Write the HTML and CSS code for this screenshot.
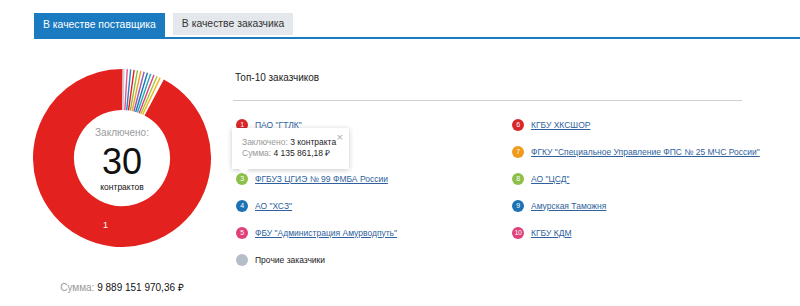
FILE: index.html
```html
<!DOCTYPE html>
<html lang="ru">
<head>
<meta charset="utf-8">
<title>Контракты</title>
<link rel="stylesheet" href="styles.css">
</head>
<body>
<div class="tabs">
  <div class="tab tab-active">В качестве поставщика</div>
  <div class="tab">В качестве заказчика</div>
</div>
<div class="content">
  <div class="chart-col">
    <div class="donut">
      <svg class="donut-svg" width="178" height="178" viewBox="-89 -89 178 178">
        <circle r="68.5" fill="none" stroke="#e3221f" stroke-width="41" stroke-dasharray="396.6 430.4" transform="rotate(-62)"/>
        <g stroke-width="1.4" fill="none">
          <line x1="0" y1="-48" x2="0" y2="-89" stroke="#c9ccd3" transform="rotate(1.2)"/>
          <line x1="0" y1="-48" x2="0" y2="-89" stroke="#e55591" transform="rotate(3.4)"/>
          <line x1="0" y1="-48" x2="0" y2="-89" stroke="#2d7fc3" transform="rotate(5.6)"/>
          <line x1="0" y1="-48" x2="0" y2="-89" stroke="#e3221f" transform="rotate(7.8)"/>
          <line x1="0" y1="-48" x2="0" y2="-89" stroke="#8cc04a" transform="rotate(10)"/>
          <line x1="0" y1="-48" x2="0" y2="-89" stroke="#f2a31f" transform="rotate(12.2)"/>
          <line x1="0" y1="-48" x2="0" y2="-89" stroke="#9b59b6" transform="rotate(14.4)"/>
          <line x1="0" y1="-48" x2="0" y2="-89" stroke="#1a75b8" transform="rotate(16.6)"/>
          <line x1="0" y1="-48" x2="0" y2="-89" stroke="#25a9b0" transform="rotate(18.8)"/>
          <line x1="0" y1="-48" x2="0" y2="-89" stroke="#e0407a" transform="rotate(21)"/>
          <line x1="0" y1="-48" x2="0" y2="-89" stroke="#a8c83a" transform="rotate(23.2)"/>
          <line x1="0" y1="-48" x2="0" y2="-89" stroke="#f2b42a" transform="rotate(25.4)"/>
        </g>
      </svg>
      <div class="donut-center">
        <div class="dc-label">Заключено:</div>
        <div class="dc-num">30</div>
        <div class="dc-unit">контрактов</div>
      </div>
      <div class="slice-label">1</div>
    </div>
    <div class="sum"><span class="muted">Сумма:</span> <span class="sum-val">9 889 151 970,36 ₽</span></div>
  </div>
  <div class="top">
    <div class="top-title">Топ-10 заказчиков</div>
    <div class="list">
      <div class="item"><span class="dot c-red">1</span><a class="link" href="#">ПАО "ГТЛК"</a></div>
      <div class="item"><span class="dot c-orange"></span></div>
      <div class="item"><span class="dot c-green">3</span><a class="link" href="#">ФГБУЗ ЦГИЭ № 99 ФМБА России</a></div>
      <div class="item"><span class="dot c-blue">4</span><a class="link" href="#">АО "ХСЗ"</a></div>
      <div class="item"><span class="dot c-pink">5</span><a class="link" href="#">ФБУ "Администрация Амурводпуть"</a></div>
      <div class="item"><span class="dot c-gray"></span><span class="plain">Прочие заказчики</span></div>
      <div class="item"><span class="dot c-red">6</span><a class="link" href="#">КГБУ ХКСШОР</a></div>
      <div class="item"><span class="dot c-orange">7</span><a class="link" href="#">ФГКУ "Специальное Управление ФПС № 25 МЧС России"</a></div>
      <div class="item"><span class="dot c-green">8</span><a class="link" href="#">АО "ЦСД"</a></div>
      <div class="item"><span class="dot c-blue">9</span><a class="link" href="#">Амурская Таможня</a></div>
      <div class="item"><span class="dot c-pink">10</span><a class="link" href="#">КГБУ КДМ</a></div>
      <div class="tooltip">
        <span class="tt-close">×</span>
        <div><span class="muted">Заключено:</span> 3 контракта</div>
        <div><span class="muted">Сумма:</span> 4 135 861,18 ₽</div>
      </div>
    </div>
  </div>
</div>
</body>
</html>
```
FILE: styles.css
```css
* { box-sizing: border-box; }
html, body { margin: 0; padding: 0; background: #fff; }
body {
  font-family: "Liberation Sans", Arial, sans-serif;
  color: #222;
  width: 800px;
  height: 306px;
  overflow: hidden;
}
.tabs {
  display: flex;
  align-items: flex-start;
  gap: 8px;
  margin: 13px 0 0 34px;
  border-bottom: 2px solid #1b7bc1;
  height: 26px;
}
.tab {
  height: 22px;
  line-height: 22px;
  padding: 0 9px;
  font-size: 10.4px;
  background: #e4e7eb;
  color: #333;
}
.tab-active {
  height: 24px;
  line-height: 24px;
  background: #1b7bc1;
  color: #fff;
}
.content {
  display: flex;
  margin: 30px 0 0 33px;
}
.chart-col {
  width: 178px;
  display: flex;
  flex-direction: column;
  align-items: center;
}
.donut {
  position: relative;
  width: 178px;
  height: 178px;
}
.donut-svg { display: block; }
.donut-center {
  position: absolute;
  inset: 0;
  display: flex;
  flex-direction: column;
  align-items: center;
  justify-content: center;
  padding-top: 2px;
}
.dc-label {
  font-size: 10px;
  line-height: 14px;
  color: #9a9a9a;
  margin-bottom: 5px;
}
.dc-num {
  font-size: 36px;
  line-height: 34px;
  color: #111;
}
.dc-unit {
  font-size: 8.5px;
  line-height: 12px;
  margin-top: 2px;
  color: #111;
}
.slice-label {
  position: absolute;
  left: 70px;
  top: 151px;
  font-size: 9px;
  color: #fff;
}
.sum {
  margin-top: 34px;
  font-size: 10px;
  line-height: 14px;
  white-space: nowrap;
}
.muted { color: #999; }
.sum-val { color: #111; }
.top {
  margin-left: 22px;
  width: 509px;
  padding-top: 2px;
}
.top-title {
  font-size: 10px;
  line-height: 14px;
  padding-left: 2px;
  color: #222;
}
.list {
  position: relative;
  margin-top: 15px;
  border-top: 1px solid #cfcfcf;
  padding: 10px 0 0 3px;
  display: grid;
  grid-template-columns: 276px 1fr;
  grid-template-rows: repeat(6, 27px);
  grid-auto-flow: column;
}
.item {
  display: flex;
  align-items: center;
  gap: 7px;
  font-size: 8.5px;
  white-space: nowrap;
}
.dot {
  width: 12px;
  height: 12px;
  border-radius: 50%;
  flex: none;
  color: #fff;
  font-size: 7px;
  line-height: 12px;
  text-align: center;
  letter-spacing: -0.3px;
}
.c-red { background: #d8262a; }
.c-orange { background: #f09a1c; }
.c-green { background: #8cc04a; }
.c-blue { background: #1c73b4; }
.c-pink { background: #e0407a; }
.c-gray { background: #b5bec8; }
.link {
  color: #2f5f9c;
  text-decoration: underline;
}
.plain { color: #222; }
.tooltip {
  position: absolute;
  left: -1px;
  top: 27px;
  width: 117px;
  height: 41px;
  background: #fff;
  box-shadow: 0 1px 5px rgba(0, 0, 0, 0.22);
  padding: 9px 0 0 10px;
  font-size: 8.5px;
  line-height: 11px;
  color: #222;
}
.tooltip::after {
  content: "";
  position: absolute;
  left: 7px;
  bottom: -5px;
  border-left: 5px solid transparent;
  border-right: 5px solid transparent;
  border-top: 5px solid #fff;
}
.tt-close {
  position: absolute;
  right: 6px;
  top: 4px;
  font-size: 11px;
  color: #aaa;
}
```
